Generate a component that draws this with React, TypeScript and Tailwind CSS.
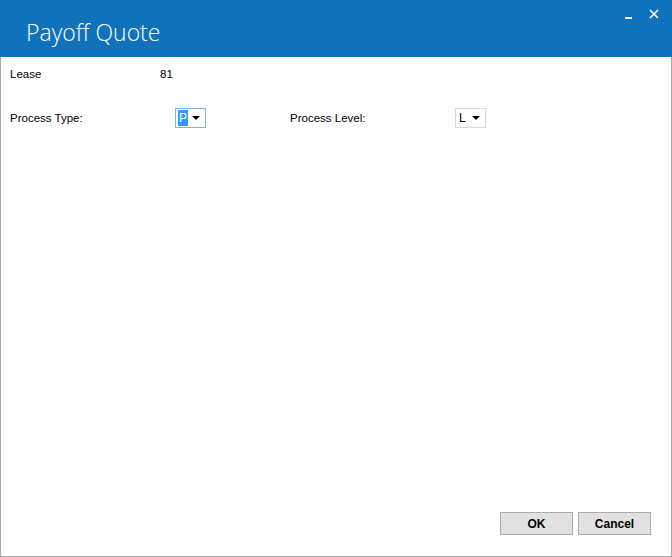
import { useState } from 'react';

function Combo({ value, focused }: { value: string; focused?: boolean }) {
  return (
    <div
      className={`flex h-[20px] w-[31px] items-center border bg-white pl-[2px] ${
        focused ? 'border-[#7eb4ea]' : 'border-[#d9d9d9]'
      }`}
    >
      <span
        className={`flex h-[16px] items-center px-[1px] text-[12px] leading-none ${
          focused ? 'bg-[#3399ff] text-white' : 'text-black'
        }`}
      >
        {value}
      </span>
      <svg className="ml-auto mr-[5px]" width="8" height="4" viewBox="0 0 8 4">
        <path d="M0 0h8L4 4z" fill="#000" />
      </svg>
    </div>
  );
}

export default function App() {
  const [processType] = useState('P');
  const [processLevel] = useState('L');

  return (
    <div
      className="flex h-[557px] w-[672px] flex-col bg-white text-[11.5px] leading-[15px] text-black"
      style={{ fontFamily: '"Liberation Sans", Arial, sans-serif' }}
    >
      <div className="relative flex h-[57px] shrink-0 items-center bg-[#1072ba] pl-[26px]">
        <h1
          className="pt-[8px] text-[23px] font-light text-white"
          style={{ fontFamily: '"Open Sans", sans-serif' }}
        >
          Payoff Quote
        </h1>
        <div className="absolute right-[13px] top-[9px] flex items-center gap-[17px]">
          <span className="mt-[8px] block h-[2px] w-[7px] bg-white" />
          <svg width="10" height="10" viewBox="0 0 10 10">
            <path d="M1 1l8 8M9 1l-8 8" stroke="#fff" strokeWidth="1.6" />
          </svg>
        </div>
      </div>

      <div className="flex flex-1 flex-col border-x border-b border-[#ababab]">
        <div className="flex pl-[9px] pt-[10px]">
          <span className="w-[150px]">Lease</span>
          <span>81</span>
        </div>

        <div className="mt-[26px] flex items-center pl-[9px]">
          <span className="w-[165px]">Process Type:</span>
          <Combo value={processType} focused />
          <span className="ml-[84px] w-[165px]">Process Level:</span>
          <Combo value={processLevel} />
        </div>

        <div className="mt-auto flex justify-end gap-[5px] pb-[21px] pr-[20px]">
          <button className="h-[23px] w-[73px] border border-[#adadad] bg-[#e1e1e1] pt-[1px] text-[12px] font-bold">
            OK
          </button>
          <button className="h-[23px] w-[73px] border border-[#adadad] bg-[#e1e1e1] pt-[1px] text-[12px] font-bold">
            Cancel
          </button>
        </div>
      </div>
    </div>
  );
}
